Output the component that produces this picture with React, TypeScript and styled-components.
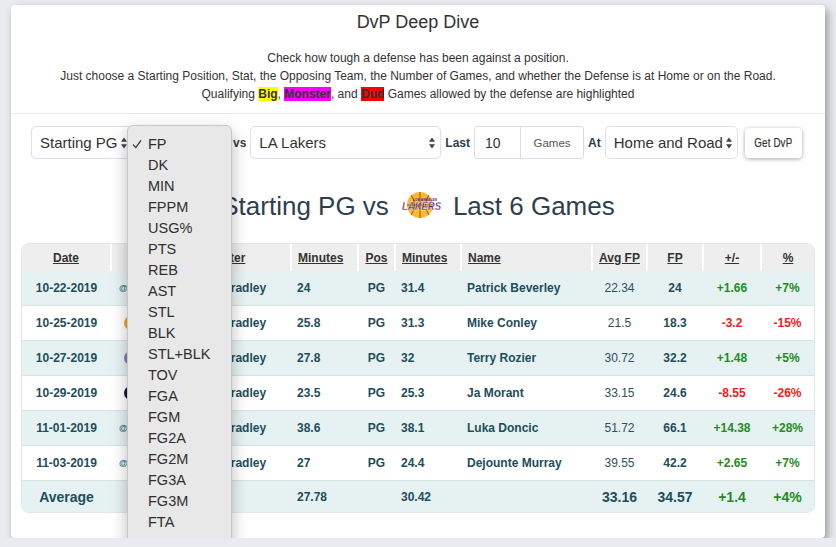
import React from 'react';
import styled, { createGlobalStyle } from 'styled-components';

const GlobalStyle = createGlobalStyle`
    html, body {
        margin: 0;
        padding: 0;
        overflow: hidden;
        background: #e9ebf0;
    }
    body {
        font-family: "Liberation Sans", Arial, sans-serif;
        color: #333;
    }
`;

const stats = [
    'FP', 'DK', 'MIN', 'FPPM', 'USG%', 'PTS', 'REB', 'AST', 'STL', 'BLK',
    'STL+BLK', 'TOV', 'FGA', 'FGM', 'FG2A', 'FG2M', 'FG3A', 'FG3M', 'FTA', 'FTM',
];

type Game = {
    date: string;
    away: boolean;
    team: [string, string];
    starter: string;
    minutes: string;
    pos: string;
    oppMinutes: string;
    name: string;
    avg: string;
    fp: string;
    diff: string;
    pct: string;
};

const games: Game[] = [
    { date: '10-22-2019', away: true, team: ['#c8102e', '#1d428a'], starter: 'Avery Bradley', minutes: '24', pos: 'PG', oppMinutes: '31.4', name: 'Patrick Beverley', avg: '22.34', fp: '24', diff: '+1.66', pct: '+7%' },
    { date: '10-25-2019', away: false, team: ['#f9a01b', '#002b5c'], starter: 'Avery Bradley', minutes: '25.8', pos: 'PG', oppMinutes: '31.3', name: 'Mike Conley', avg: '21.5', fp: '18.3', diff: '-3.2', pct: '-15%' },
    { date: '10-27-2019', away: false, team: ['#8a7bbd', '#00788c'], starter: 'Avery Bradley', minutes: '27.8', pos: 'PG', oppMinutes: '32', name: 'Terry Rozier', avg: '30.72', fp: '32.2', diff: '+1.48', pct: '+5%' },
    { date: '10-29-2019', away: false, team: ['#12173f', '#5d76a9'], starter: 'Avery Bradley', minutes: '23.5', pos: 'PG', oppMinutes: '25.3', name: 'Ja Morant', avg: '33.15', fp: '24.6', diff: '-8.55', pct: '-26%' },
    { date: '11-01-2019', away: true, team: ['#00538c', '#b8c4ca'], starter: 'Avery Bradley', minutes: '38.6', pos: 'PG', oppMinutes: '38.1', name: 'Luka Doncic', avg: '51.72', fp: '66.1', diff: '+14.38', pct: '+28%' },
    { date: '11-03-2019', away: true, team: ['#8a8d8f', '#000000'], starter: 'Avery Bradley', minutes: '27', pos: 'PG', oppMinutes: '24.4', name: 'Dejounte Murray', avg: '39.55', fp: '42.2', diff: '+2.65', pct: '+7%' },
];

const columns: { label: string; width: number; align: 'left' | 'center' }[] = [
    { label: 'Date', width: 89, align: 'center' },
    { label: '', width: 50, align: 'center' },
    { label: 'Starter', width: 130, align: 'center' },
    { label: 'Minutes', width: 67, align: 'left' },
    { label: 'Pos', width: 37, align: 'center' },
    { label: 'Minutes', width: 66, align: 'left' },
    { label: 'Name', width: 131, align: 'left' },
    { label: 'Avg FP', width: 55, align: 'center' },
    { label: 'FP', width: 56, align: 'center' },
    { label: '+/-', width: 58, align: 'center' },
    { label: '%', width: 53, align: 'center' },
];

const toneOf = (value: string) => (value.startsWith('-') ? 'bad' : 'good');

const Arrows: React.FC = () => (
    <svg width="8" height="14" viewBox="0 0 8 14">
        <path d="M1 5.8 L4 1.6 L7 5.8 Z M1 8.2 L4 12.4 L7 8.2 Z" fill="#3d4550" />
    </svg>
);

const Check: React.FC = () => (
    <svg width="10" height="10" viewBox="0 0 10 10">
        <polyline points="1,5.6 3.8,8.6 9,1.4" fill="none" stroke="#333" strokeWidth="1.3" />
    </svg>
);

const LakersLogo: React.FC = () => (
    <svg width="44" height="32" viewBox="0 0 44 32">
        <circle cx="21" cy="15" r="13" fill="#fdb927" />
        <path
            d="M8 15 H34 M21 2 V28 M12 5 Q19 15 12 25 M30 5 Q23 15 30 25"
            stroke="#4a3410"
            strokeWidth="0.7"
            fill="none"
        />
        <text x="26" y="10.5" fontSize="3.4" fontWeight="bold" fill="#552583" textAnchor="middle">
            LOS ANGELES
        </text>
        <text
            x="3"
            y="20"
            fontSize="11"
            fontStyle="italic"
            fontWeight="bold"
            fill="#552583"
            stroke="#ffffff"
            strokeWidth="0.3"
            textLength="39"
            lengthAdjust="spacingAndGlyphs"
            fontFamily="Liberation Sans, Arial, sans-serif"
        >
            LAKERS
        </text>
    </svg>
);

const TeamDot: React.FC<{ colors: [string, string] }> = ({ colors }) => (
    <svg width="16" height="16" viewBox="0 0 16 16">
        <circle cx="8" cy="8" r="7" fill={colors[0]} />
        <circle cx="8" cy="8" r="3.5" fill={colors[1]} />
    </svg>
);

const App: React.FC = () => {
    return (
        <Page>
            <GlobalStyle />
            <Card>
                <Header>
                    <Title>DvP Deep Dive</Title>
                    <Description>
                        Check how tough a defense has been against a position.
                        <br />
                        Just choose a Starting Position, Stat, the Opposing Team, the Number of Games, and
                        whether the Defense is at Home or on the Road.
                        <br />
                        Qualifying <Mark $bg="#ffff00">Big</Mark>, <Mark $bg="#ff00ff">Monster</Mark>, and{' '}
                        <Mark $bg="#ff0000">Dud</Mark> Games allowed by the defense are highlighted
                    </Description>
                </Header>
                <Body>
                    <Controls>
                        <SelectBox $width={102}>
                            <span>Starting PG</span>
                            <Arrows />
                        </SelectBox>
                        <SelectWrap>
                            <SelectBox $width={92} $focused>
                                <span>FP</span>
                                <Arrows />
                            </SelectBox>
                            <Dropdown>
                                {stats.map((stat, index) => (
                                    <Option key={stat}>
                                        <CheckSlot>{index === 0 && <Check />}</CheckSlot>
                                        {stat}
                                    </Option>
                                ))}
                            </Dropdown>
                        </SelectWrap>
                        <Label>vs</Label>
                        <SelectBox $width={191}>
                            <span>LA Lakers</span>
                            <Arrows />
                        </SelectBox>
                        <Label>Last</Label>
                        <InputGroup>
                            <NumberInput>10</NumberInput>
                            <Addon>Games</Addon>
                        </InputGroup>
                        <Label>At</Label>
                        <SelectBox $width={133}>
                            <span>Home and Road</span>
                            <Arrows />
                        </SelectBox>
                        <GetButton>
                            <Narrow>Get DvP</Narrow>
                        </GetButton>
                    </Controls>

                    <Heading>
                        <span>Starting PG vs</span>
                        <LakersLogo />
                        <span>Last 6 Games</span>
                    </Heading>

                    <TableFrame>
                        <Table>
                            <colgroup>
                                {columns.map((col, index) => (
                                    <col key={index} style={{ width: col.width }} />
                                ))}
                            </colgroup>
                            <thead>
                                <tr>
                                    {columns.map((col, index) => (
                                        <HeadCell key={index} $align={col.align}>
                                            {col.label}
                                        </HeadCell>
                                    ))}
                                </tr>
                            </thead>
                            <tbody>
                                {games.map((game, index) => (
                                    <Row key={game.date} $alt={index % 2 === 0}>
                                        <Cell $align="center">{game.date}</Cell>
                                        <Cell $align="left">
                                            <Opponent $home={!game.away}>
                                                {game.away && <AtSign>@</AtSign>}
                                                <TeamDot colors={game.team} />
                                            </Opponent>
                                        </Cell>
                                        <Cell $align="center">{game.starter}</Cell>
                                        <Cell $align="left">{game.minutes}</Cell>
                                        <Cell $align="center">{game.pos}</Cell>
                                        <Cell $align="left">{game.oppMinutes}</Cell>
                                        <Cell $align="left">{game.name}</Cell>
                                        <Cell $align="center" $regular>
                                            {game.avg}
                                        </Cell>
                                        <Cell $align="center">{game.fp}</Cell>
                                        <Cell $align="center" $tone={toneOf(game.diff)}>
                                            {game.diff}
                                        </Cell>
                                        <Cell $align="center" $tone={toneOf(game.pct)}>
                                            {game.pct}
                                        </Cell>
                                    </Row>
                                ))}
                                <AverageRow>
                                    <Cell $align="center" $big>
                                        Average
                                    </Cell>
                                    <Cell $align="left" />
                                    <Cell $align="center" />
                                    <Cell $align="left">27.78</Cell>
                                    <Cell $align="center" />
                                    <Cell $align="left">30.42</Cell>
                                    <Cell $align="left" />
                                    <Cell $align="center" $big>
                                        33.16
                                    </Cell>
                                    <Cell $align="center" $big>
                                        34.57
                                    </Cell>
                                    <Cell $align="center" $big $tone="good">
                                        +1.4
                                    </Cell>
                                    <Cell $align="center" $big $tone="good">
                                        +4%
                                    </Cell>
                                </AverageRow>
                            </tbody>
                        </Table>
                    </TableFrame>
                </Body>
            </Card>
        </Page>
    );
};
export default App;

const Page = styled.div`
    padding: 5px 11px 0;
`;
const Card = styled.div`
    background: #fff;
    border-radius: 4px;
    box-shadow: 3px 4px 8px rgba(0, 0, 0, 0.35);
`;
const Header = styled.div`
    text-align: center;
    padding: 5px 0 10px;
    border-bottom: 1px solid #e8e8e8;
`;
const Title = styled.h1`
    margin: 0 0 15px;
    font-size: 18px;
    line-height: 24px;
    font-weight: normal;
    color: #333;
`;
const Description = styled.div`
    font-size: 12px;
    line-height: 18px;
    color: #333;
`;
const Mark = styled.b<{ $bg: string }>`
    background: ${(p) => p.$bg};
    color: #333;
`;
const Body = styled.div`
    padding: 12px 10px 25px;
`;
const Controls = styled.div`
    display: flex;
    align-items: center;
    gap: 4px;
    height: 33px;
    padding-left: 10px;
`;
const SelectWrap = styled.div`
    position: relative;
`;
const SelectBox = styled.div<{ $width: number; $focused?: boolean }>`
    display: flex;
    align-items: center;
    justify-content: space-between;
    box-sizing: border-box;
    width: ${(p) => p.$width}px;
    height: 33px;
    padding: 0 4px 0 8px;
    border: 1px solid ${(p) => (p.$focused ? '#3b4756' : '#dde1e8')};
    border-radius: 5px;
    background: #fff;
    font-size: 15px;
    color: #333;
    white-space: nowrap;
`;
const Dropdown = styled.div`
    position: absolute;
    left: -10px;
    top: -1px;
    z-index: 10;
    width: 105px;
    box-sizing: border-box;
    padding: 7px 0;
    background: #e8e8e8;
    border: 1px solid #c6c6c6;
    border-radius: 6px;
    box-shadow: 0 6px 16px rgba(0, 0, 0, 0.28);
`;
const Option = styled.div`
    display: flex;
    align-items: center;
    height: 21px;
    padding-left: 4px;
    font-size: 14.5px;
    color: #2f2f2f;
`;
const CheckSlot = styled.span`
    display: flex;
    align-items: center;
    width: 16px;
`;
const Label = styled.span`
    font-size: 12px;
    font-weight: bold;
    color: #2c3e50;
`;
const InputGroup = styled.div`
    display: flex;
    box-sizing: border-box;
    width: 110px;
    height: 33px;
    border: 1px solid #d9dde4;
    border-radius: 3px;
`;
const NumberInput = styled.div`
    display: flex;
    align-items: center;
    width: 45px;
    padding-left: 10px;
    box-sizing: border-box;
    font-size: 14px;
    color: #333;
`;
const Addon = styled.div`
    display: flex;
    align-items: center;
    justify-content: center;
    flex: 1;
    border-left: 1px solid #d9dde4;
    font-size: 11.5px;
    color: #555;
`;
const GetButton = styled.button`
    display: flex;
    align-items: center;
    justify-content: center;
    width: 57px;
    height: 30px;
    margin-left: 3px;
    padding: 0;
    border: 0;
    border-radius: 4px;
    background: #fff;
    box-shadow: 0 1px 4px rgba(0, 0, 0, 0.35);
    font-family: "Liberation Sans", Arial, sans-serif;
    font-size: 12.5px;
    color: #333;
`;
const Narrow = styled.span`
    display: inline-block;
    transform: scaleX(0.78);
    letter-spacing: 0.2px;
    -webkit-text-stroke: 0.2px #333;
`;
const Heading = styled.div`
    display: flex;
    align-items: center;
    justify-content: center;
    gap: 10px;
    margin: 29px 0 19px;
    font-size: 26px;
    line-height: 36px;
    color: #2c3e50;
`;
const TableFrame = styled.div`
    border: 1px solid #e1e7e7;
    border-radius: 8px;
    overflow: hidden;
`;
const Table = styled.table`
    width: 100%;
    table-layout: fixed;
    border-collapse: collapse;
`;
const HeadCell = styled.th<{ $align: 'left' | 'center' }>`
    height: 27px;
    padding: 0 6px;
    background: #eeeeee;
    border-left: 2px solid #fff;
    text-align: ${(p) => p.$align};
    font-size: 12px;
    font-weight: bold;
    text-decoration: underline;
    color: #333;
    &:first-child {
        border-left: 0;
    }
`;
const Row = styled.tr<{ $alt: boolean }>`
    background: ${(p) => (p.$alt ? '#e6f2f2' : '#fff')};
    border-bottom: 1px solid #d7e4e4;
`;
const AverageRow = styled.tr`
    background: #e6f2f2;
`;
const Cell = styled.td<{
    $align: 'left' | 'center';
    $tone?: 'good' | 'bad';
    $regular?: boolean;
    $big?: boolean;
}>`
    height: 34px;
    padding: 0 6px;
    text-align: ${(p) => p.$align};
    white-space: nowrap;
    overflow: hidden;
    font-size: ${(p) => (p.$big ? '14px' : '12px')};
    font-weight: ${(p) => (p.$regular ? 'normal' : 'bold')};
    color: ${(p) => (p.$tone === 'good' ? '#1f8c22' : p.$tone === 'bad' ? '#f51a1a' : p.$regular ? '#2f4f5f' : '#1e4d5c')};
    tr:last-child > & {
        height: 31px;
    }
`;
const Opponent = styled.div<{ $home: boolean }>`
    display: flex;
    align-items: center;
    gap: 2px;
    padding-left: ${(p) => (p.$home ? 6 : 2)}px;
`;
const AtSign = styled.span`
    font-size: 9px;
    color: #2a6f7f;
`;
